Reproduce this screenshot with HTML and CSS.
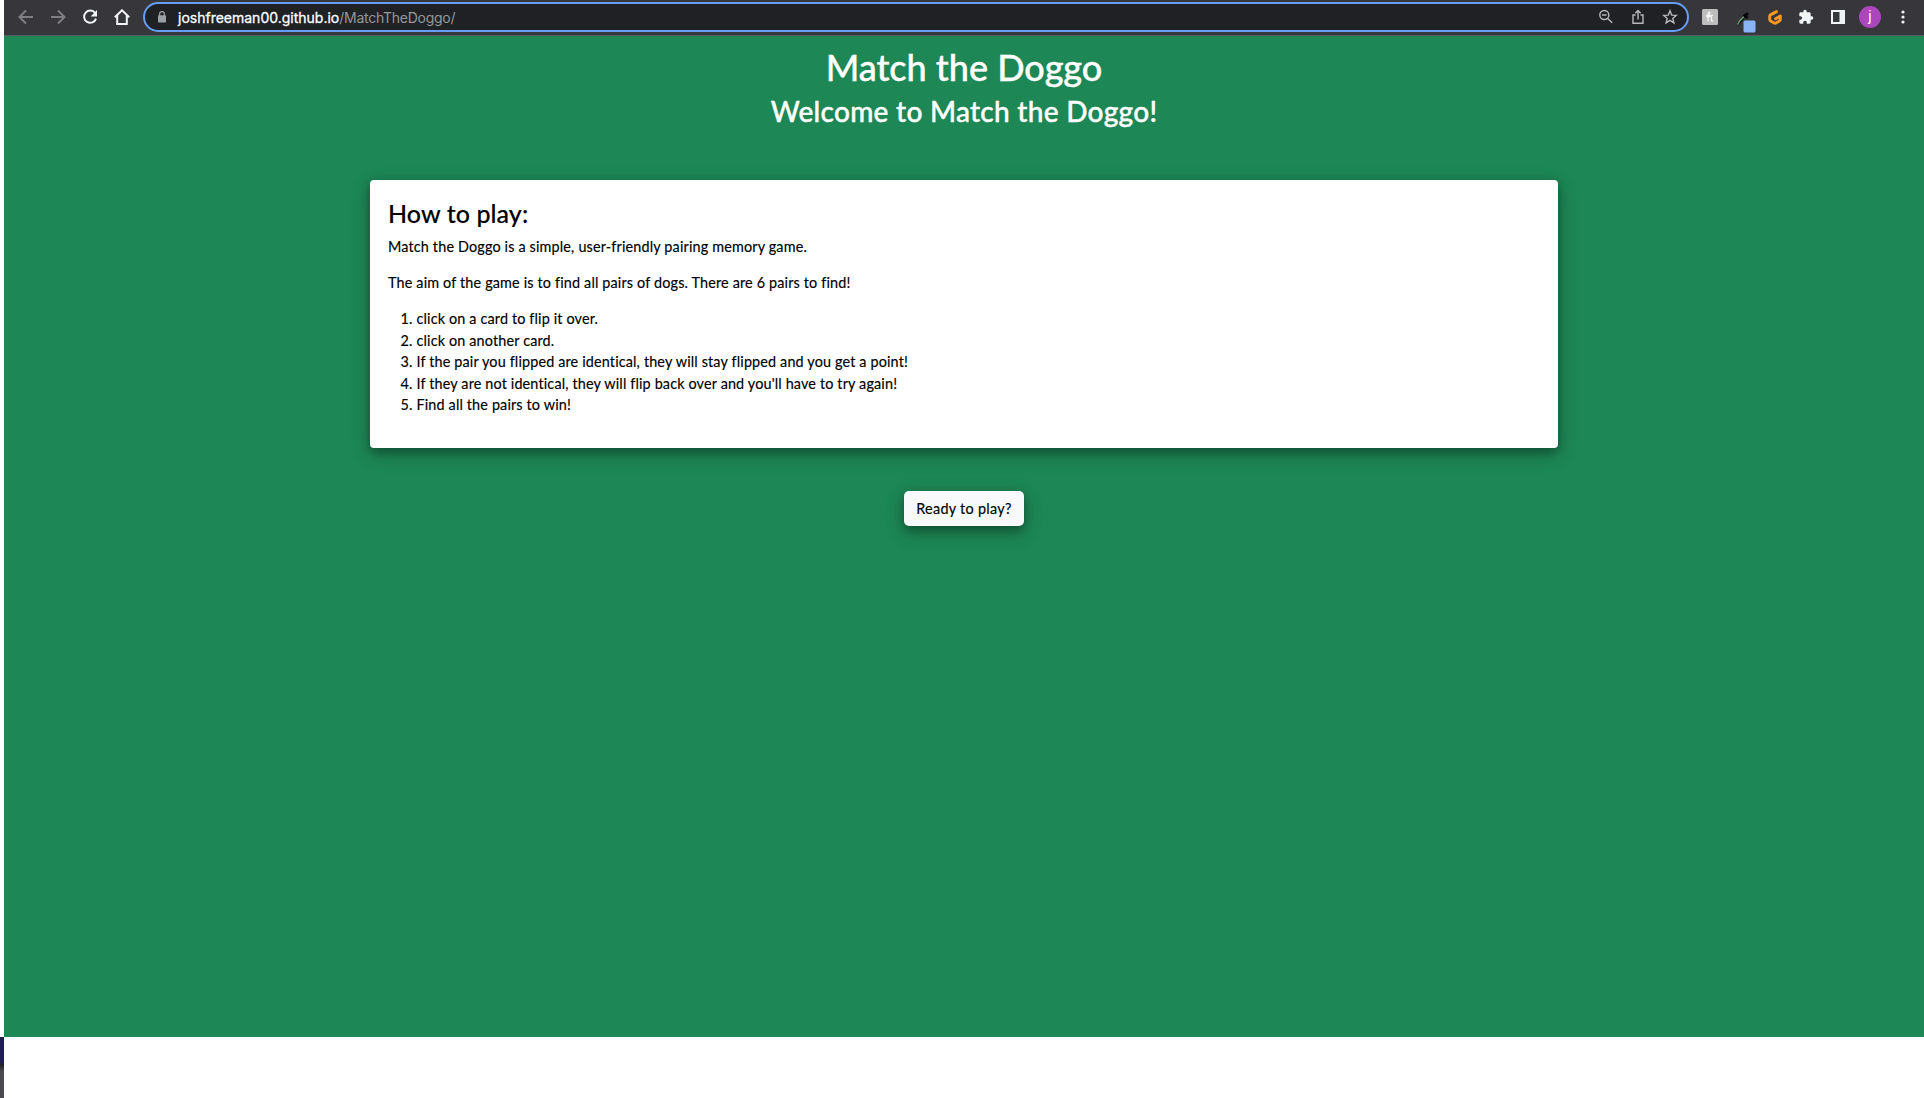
FILE: index.html
```html
<!DOCTYPE html>
<html lang="en">
<head>
<meta charset="utf-8">
<title>Match the Doggo</title>
<link rel="stylesheet" href="styles.css">
</head>
<body>
<div class="edge"><div class="edge-dark"></div></div>
<div class="window">
  <header class="toolbar">
    <nav class="nav">
      <svg class="dim" width="16" height="16" viewBox="0 0 16 16"><path d="M15 8H2M8 1.500L1.500 8 8 14.500"/></svg>
      <svg class="dim" width="16" height="16" viewBox="0 0 16 16"><path d="M1 8h13M8 1.500L14.500 8 8 14.500"/></svg>
      <svg width="16" height="16" viewBox="0 0 16 16"><path d="M13.200 4.200A6.100 6.100 0 1 0 14 9.600"/><path class="solid" d="M15 1v6.400H8.600z"/></svg>
      <svg width="16" height="16" viewBox="0 0 16 16"><path d="M.8 8.200L8 1.300l7.200 6.900M3.200 6.500V15h9.600V6.500"/></svg>
    </nav>
    <div class="address">
      <svg class="lock" width="10" height="12" viewBox="0 0 10 12"><path d="M2.600 5V3a2.400 2.400 0 0 1 4.800 0v2" fill="none" stroke="#9aa0a6" stroke-width="1.300"/><rect x="1" y="4.300" width="8" height="7.200" rx=".8" fill="#9aa0a6"/></svg>
      <span class="url"><b>joshfreeman00.github.io</b><i>/MatchTheDoggo/</i></span>
      <div class="tools">
        <svg width="16" height="16" viewBox="0 0 16 16"><circle cx="6.300" cy="6" r="4.500"/><path d="M9.700 9.400l4.500 4.400M4 6h4.600"/></svg>
        <svg width="16" height="16" viewBox="0 0 16 16"><path d="M5.500 6H3v8.300h10V6h-2.500M8 10.500V1.800M5.300 4.300L8 1.600l2.700 2.700"/></svg>
        <svg width="16" height="16" viewBox="0 0 16 16"><path d="M8 1.800l1.700 4.300 4.600.3-3.500 3 1.100 4.500L8 11.400l-3.900 2.500 1.100-4.500-3.500-3 4.600-.3z"/></svg>
      </div>
    </div>
    <div class="extensions">
      <svg class="honey" width="16" height="16" viewBox="0 0 16 16"><rect width="16" height="16" rx="1.500" fill="#bdbdbd"/><path d="M4 7.500C6 7 8 5 7.700 3.500 7.300 2.500 6 4 6 6v6.500M6 9c1.500-2.500 3.500-2.500 3.500 0v2.500c0 1 1 .8 1.700.3M4 6.500h7" fill="none" stroke="#f3f3f3" stroke-width="1.300"/></svg>
      <svg class="picker" width="20" height="22" viewBox="0 0 20 22"><path d="M1.500 14L9 5" stroke="#111" stroke-width="2.200"/><path d="M1.500 13.700L4 9.500 8.200 5.500" stroke="#69a877" stroke-width="1.300" fill="none"/><path d="M7.500 3.500l4 3.600M9.500 4.500L12 2" stroke="#050505" stroke-width="2.600"/><rect x="7.500" y="9.500" width="12" height="12" rx="1.500" fill="#8ab4f8"/></svg>
      <svg class="gitpod" width="14" height="15" viewBox="0 0 14 15"><path d="M8.500 1.600L2.800 4.600Q1.700 5.200 1.700 6.300v3.200q0 1 .9 1.500l3.500 2q1 .5 1.900 0l3.400-2q.9-.5.9-1.500V6L7.600 8.800" fill="none" stroke="#ff9a1f" stroke-width="2.900" stroke-linecap="round" stroke-linejoin="round"/></svg>
      <svg class="puzzle" width="16" height="16" viewBox="0 0 24 24"><path fill="#f1f3f4" d="M20.500 11H19V7c0-1.100-.9-2-2-2h-4V3.500a2.500 2.500 0 0 0-5 0V5H4c-1.100 0-2 .9-2 2v3.800h1.500a2.700 2.700 0 0 1 0 5.400H2V20c0 1.100.9 2 2 2h3.800v-1.500a2.700 2.700 0 0 1 5.400 0V22H17c1.100 0 2-.9 2-2v-4h1.500a2.500 2.500 0 0 0 0-5z"/></svg>
      <svg class="panel" width="14" height="14" viewBox="0 0 14 14"><path fill="#f1f3f4" fill-rule="evenodd" d="M0 0h14v14H0zM2 2v10h6.500V2z"/></svg>
      <span class="avatar">j</span>
      <svg class="more" width="4" height="14" viewBox="0 0 4 14"><g fill="#f1f3f4"><circle cx="2" cy="2" r="1.600"/><circle cx="2" cy="7" r="1.600"/><circle cx="2" cy="12" r="1.600"/></g></svg>
    </div>
  </header>
  <main>
    <h1>Match the Doggo</h1>
    <h2>Welcome to Match the Doggo!</h2>
    <section class="card">
      <h3>How to play:</h3>
      <p>Match the Doggo is a simple, user-friendly pairing memory game.</p>
      <p>The aim of the game is to find all pairs of dogs. There are 6 pairs to find!</p>
      <ol>
        <li>click on a card to flip it over.</li>
        <li>click on another card.</li>
        <li>If the pair you flipped are identical, they will stay flipped and you get a point!</li>
        <li>If they are not identical, they will flip back over and you'll have to try again!</li>
        <li>Find all the pairs to win!</li>
      </ol>
    </section>
    <button>Ready to play?</button>
  </main>
</div>
</body>
</html>
```
FILE: styles.css
```css
* { box-sizing: border-box; }
body { margin: 0; height: 1098px; display: flex; overflow: hidden; background: #fff; color: #000; font-family: Lato, "Open Sans", sans-serif; }
.edge { width: 4px; height: 1098px; padding-top: 1037px; background: #fff; }
.edge-dark { height: 61px; background: linear-gradient(#211b50 0 25px, #222 28px, #4a4a4c 34px); }
.window { width: 1920px; }
.toolbar { height: 36px; display: flex; align-items: flex-start; background: #37363b; border-bottom: 1px solid #5b5a60; }
.nav { width: 139px; padding: 9px 0 0 14px; display: flex; gap: 16px; }
.nav svg { fill: none; stroke: #f1f3f4; stroke-width: 2; }
.nav .dim { stroke: #7f7f82; }
.nav .solid { fill: #f1f3f4; stroke: none; }
.address { width: 1546px; height: 30px; margin-top: 2px; display: flex; align-items: center; border: 2px solid #669df6; border-radius: 15px; background: #202124; padding: 0 9px 0 12px; }
.url { margin-left: 11px; font: 14px "Inter", sans-serif; white-space: nowrap; color: #96979a; }
.url b { font-weight: 400; color: #fff; -webkit-text-stroke: .3px #fff; }
.url i { font-style: normal; letter-spacing: -.26px; }
.tools { margin-left: auto; display: flex; gap: 16px; }
.tools svg { fill: none; stroke: #b5b7bb; stroke-width: 1.4; }
.extensions { height: 34px; display: flex; align-items: center; padding-left: 13px; }
.picker { margin: 9px 0 0 18px; }
.gitpod { margin-left: 12px; }
.puzzle { margin-left: 16px; }
.panel { margin-left: 17px; }
.avatar { width: 22px; height: 22px; margin-left: 14px; border-radius: 50%; background: #ab47bc; color: #fff; font: 14px/21px Roboto, sans-serif; text-align: center; }
.more { margin-left: 20px; }
main { height: 1001px; display: flex; flex-direction: column; align-items: center; background: #1d8755; }
h1, h2, h3, p, ol { margin: 0; }
h1, h2 { color: #fff; font-weight: 500; white-space: nowrap; -webkit-text-stroke: .4px #fff; }
h1 { margin-top: 10px; font-size: 36px; line-height: 43px; }
h2 { margin-top: 5px; font-size: 28px; line-height: 34px; letter-spacing: .28px; }
.card { width: 1188px; height: 268px; margin-top: 52px; padding: 18px; border-radius: 4px; background: #fff; box-shadow: 0 4px 10px rgba(0, 0, 0, .28), 0 6px 20px rgba(0, 0, 0, .24); -webkit-text-stroke: .15px #000; }
h3 { font-size: 25px; font-weight: 500; line-height: 30px; margin-bottom: 8px; letter-spacing: .08px; }
p { font-size: 14.4px; line-height: 21.6px; margin-bottom: 14.4px; letter-spacing: .16px; }
ol { padding-left: 28.5px; font-size: 14.4px; line-height: 21.6px; letter-spacing: .15px; }
button { width: 120px; height: 35px; margin-top: 43px; padding: 0; border: 0; border-radius: 5px; background: #f8f9fa; font: 14.4px Lato, sans-serif; letter-spacing: .3px; color: #000; box-shadow: 0 4px 10px rgba(0, 0, 0, .28), 0 6px 20px rgba(0, 0, 0, .24); -webkit-text-stroke: .15px #000; white-space: nowrap; }
```
